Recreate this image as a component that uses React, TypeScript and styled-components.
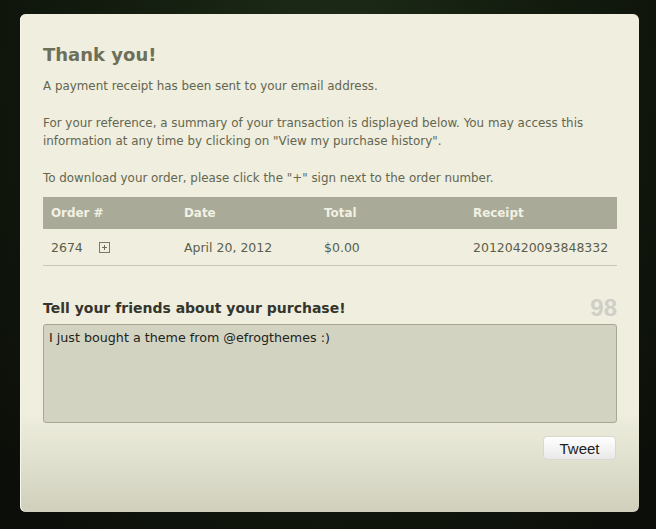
import React from 'react';
import styled, { createGlobalStyle } from 'styled-components';

const Global = createGlobalStyle`
  html, body {
    margin: 0;
    padding: 0;
    height: 100%;
  }
  body {
    background: radial-gradient(ellipse at 50% 15%, #1f2d18 0%, #131c0f 45%, #0b0d08 100%);
    font-family: "DejaVu Sans", Verdana, sans-serif;
  }
`;

const Page = styled.div`
  width: 656px;
  height: 529px;
  padding: 14px 17px 17px 20px;
  box-sizing: border-box;
`;

const Panel = styled.div`
  height: 498px;
  border-radius: 6px;
  background: linear-gradient(to bottom, #efeedf 0%, #efeedf 80%, #e3e3d1 88%, #cfcfbc 100%);
  box-shadow: inset 1px 0 0 #f7f7ec;
  padding: 30px 22px 0 23px;
  box-sizing: border-box;
  display: flex;
  flex-direction: column;
`;

const Title = styled.h1`
  margin: 0 0 11px;
  font-size: 18px;
  line-height: 22px;
  font-weight: bold;
  color: #6d7059;
`;

const Para = styled.p`
  margin: 0 0 19px;
  font-size: 11.9px;
  line-height: 18px;
  color: #64664f;
`;

const Table = styled.div`
  margin-top: -9px;
  display: flex;
  flex-direction: column;
`;

const Row = styled.div<{ $head?: boolean }>`
  display: grid;
  grid-template-columns: 133px 140px 149px 1fr;
  align-items: center;
  height: ${p => (p.$head ? '32px' : '36px')};
  padding-left: 8px;
  background: ${p => (p.$head ? '#a9ab98' : 'transparent')};
  border-bottom: ${p => (p.$head ? 'none' : '1px solid #c6c6b3')};
  font-size: ${p => (p.$head ? '11.9px' : '12.5px')};
  font-weight: ${p => (p.$head ? 'bold' : 'normal')};
  color: ${p => (p.$head ? '#f1f1e4' : '#5c5e4c')};
`;

const OrderCell = styled.div`
  display: flex;
  align-items: center;
  gap: 16px;
`;

const PlusBox = styled.span`
  width: 9px;
  height: 9px;
  border: 1px solid #7a7c68;
  position: relative;
  display: inline-block;
  &::before, &::after {
    content: '';
    position: absolute;
    background: #6b6d5a;
  }
  &::before {
    left: 2px;
    top: 4px;
    width: 5px;
    height: 1px;
  }
  &::after {
    left: 4px;
    top: 2px;
    width: 1px;
    height: 5px;
  }
`;

const ShareHead = styled.div`
  margin-top: 29px;
  display: flex;
  justify-content: space-between;
  align-items: flex-end;
  height: 22px;
`;

const ShareTitle = styled.h2`
  margin: 0;
  font-size: 14px;
  font-weight: bold;
  color: #34352b;
  line-height: 18px;
`;

const Counter = styled.span`
  font-family: "Liberation Sans", Arial, sans-serif;
  font-size: 24px;
  font-weight: bold;
  color: #cfcfc6;
  line-height: 24px;
  margin-bottom: -3px;
`;

const TweetBox = styled.div`
  margin-top: 7px;
  height: 99px;
  box-sizing: border-box;
  background: #d3d3c2;
  border: 1px solid #a6a795;
  border-radius: 3px;
  padding: 5px 5px;
  font-size: 12.7px;
  line-height: 16px;
  color: #222319;
`;

const Actions = styled.div`
  margin-top: 13px;
  display: flex;
  justify-content: flex-end;
  padding-right: 1px;
`;

const TweetButton = styled.button`
  width: 73px;
  height: 24px;
  border: 1px solid #d8d8d0;
  border-radius: 4px;
  background: linear-gradient(to bottom, #ffffff 0%, #f4f4f4 50%, #e9e9e9 100%);
  font-family: "Liberation Sans", Arial, sans-serif;
  font-size: 15px;
  color: #222;
  padding: 0;
`;

const App: React.FC = () => {
  return (
    <>
      <Global />
      <Page>
        <Panel>
          <Title>Thank you!</Title>
          <Para>A payment receipt has been sent to your email address.</Para>
          <Para>
            For your reference, a summary of your transaction is displayed below. You may access this
            information at any time by clicking on "View my purchase history".
          </Para>
          <Para>To download your order, please click the "+" sign next to the order number.</Para>

          <Table>
            <Row $head>
              <div>Order #</div>
              <div>Date</div>
              <div>Total</div>
              <div>Receipt</div>
            </Row>
            <Row>
              <OrderCell>
                2674 <PlusBox />
              </OrderCell>
              <div>April 20, 2012</div>
              <div>$0.00</div>
              <div>20120420093848332</div>
            </Row>
          </Table>

          <ShareHead>
            <ShareTitle>Tell your friends about your purchase!</ShareTitle>
            <Counter>98</Counter>
          </ShareHead>
          <TweetBox>I just bought a theme from @efrogthemes :)</TweetBox>
          <Actions>
            <TweetButton>Tweet</TweetButton>
          </Actions>
        </Panel>
      </Page>
    </>
  );
};

export default App;
